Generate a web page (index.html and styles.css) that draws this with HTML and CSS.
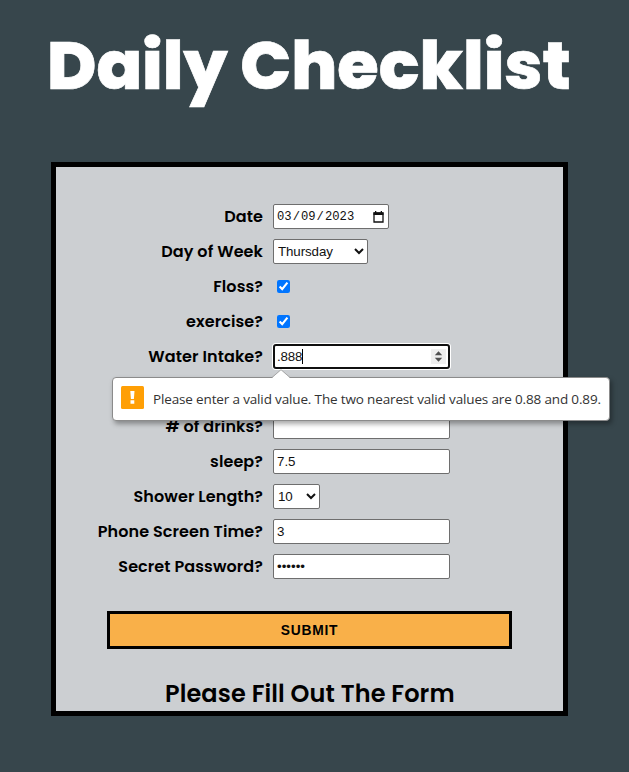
FILE: index.html
```html
<!DOCTYPE html>
<html lang="en">
<head>
<meta charset="utf-8">
<title>Daily Checklist</title>
<link rel="stylesheet" href="styles.css">
</head>
<body>
<h1 class="title">Daily Checklist</h1>
<form class="card">
  <div class="row"><label>Date</label>
    <div class="box date"><span>03</span><i>/</i><span>09</span><i>/</i><span>2023</span>
      <svg class="cal" width="11" height="12" viewBox="0 0 11 12"><path d="M1 2h9v9H1z" fill="none" stroke="#111" stroke-width="1.300"/><path d="M.5 1.500h10v2.500H.5zM2 0h1.300v2H2zM7.700 0H9v2H7.700z" fill="#111"/></svg>
    </div></div>
  <div class="row"><label>Day of Week</label><select class="box day"><option>Thursday</option></select></div>
  <div class="row"><label>Floss?</label><input type="checkbox" checked></div>
  <div class="row"><label>exercise?</label><input type="checkbox" checked></div>
  <div class="row"><label>Water Intake?</label>
    <div class="box wide focused"><span>.888</span><b class="caret"></b>
      <svg class="spin" width="15" height="15" viewBox="0 0 15 15"><path d="M0 0h15v15H0z" fill="#efefef"/><path d="M3.800 6.300 7.500 2.300 11.200 6.300zM3.800 8.700 7.500 12.700 11.200 8.700z" fill="#505050"/></svg>
      <div class="tip" role="alert">
        <svg class="pointer" width="18" height="9" viewBox="0 0 18 9"><path d="M0 9 9 .7 18 9z" fill="#fff"/><path d="M0 8.500 9 .7 18 8.500" fill="none" stroke="#999" stroke-width=".8"/></svg>
        <svg class="warn" width="23" height="23" viewBox="0 0 23 23"><rect width="23" height="23" rx="1.500" fill="#ff9f05"/><path d="M9.300 5h4.200l-.6 8H9.900zM9.500 14.300h3.800v3.500H9.500z" fill="#fff"/></svg>
        <span>Please enter a valid value. The two nearest valid values are 0.88 and 0.89.</span>
      </div>
    </div></div>
  <div class="row"></div>
  <div class="row"><label># of drinks?</label><input class="box wide" type="text"></div>
  <div class="row"><label>sleep?</label><input class="box wide" type="text" value="7.5"></div>
  <div class="row"><label>Shower Length?</label><select class="box shower"><option>10</option></select></div>
  <div class="row"><label>Phone Screen Time?</label><input class="box wide" type="text" value="3"></div>
  <div class="row"><label>Secret Password?</label><input class="box wide" type="password" value="secret"></div>
  <button class="submit" type="button">SUBMIT</button>
  <h2 class="message">Please Fill Out The Form</h2>
</form>
</body>
</html>
```
FILE: styles.css
```css
* { box-sizing: border-box; }
body {
  margin: 0;
  height: 772px;
  overflow: hidden;
  background: #37464c;
  font-family: Poppins, Inter, sans-serif;
  color: #000;
}
.title {
  margin: 0;
  padding: 16px 0 0 47px;
  height: 162px;
  font-size: 67.2px;
  line-height: 100px;
  font-weight: 800;
  color: #fff;
  -webkit-text-stroke: 0.7px #fff;
  white-space: nowrap;
}
.card {
  width: 517px;
  height: 554px;
  margin-left: 51px;
  padding-top: 32px;
  border: 5px solid #000;
  background: #cccfd2;
}
.row {
  display: grid;
  grid-template-columns: 207px 1fr;
  column-gap: 10px;
  align-items: center;
  height: 35px;
}
label {
  text-align: right;
  font-size: 16px;
  font-weight: 600;
  line-height: 24px;
  letter-spacing: 0.09px;
  white-space: nowrap;
}
input[type="checkbox"] { width: 13px; height: 13px; margin: 0 0 0 4px; }
.box {
  height: 25px;
  margin: 0;
  padding: 1px 3px;
  border: 1px solid #6e6e6e;
  border-radius: 2px;
  background-color: #fff;
  font: 13.333px "Liberation Sans", sans-serif;
  color: #111;
}
select.box { padding: 0; letter-spacing: -0.1px; }
.wide { width: 177px; }
.day { width: 95px; }
.shower { width: 47px; }
.date {
  display: flex;
  align-items: center;
  width: 116px;
  font: 12.2px "Liberation Mono", monospace;
}
.date i { font-style: normal; margin: 0 1px; }
.cal { margin-left: auto; margin-right: 1px; }
.focused {
  position: relative;
  display: flex;
  align-items: center;
  border: 2px solid #101010;
  border-radius: 3px;
  padding: 0 2px;
  box-shadow: 0 0 0 1px #fff;
  letter-spacing: -0.2px;
}
.caret { width: 1px; height: 15px; background: #000; }
.spin { margin-left: auto; }
.tip {
  position: absolute;
  left: -163px;
  top: 31px;
  z-index: 2;
  display: flex;
  align-items: center;
  gap: 9px;
  width: 498px;
  height: 44px;
  padding: 0 8px 4px;
  border: 1px solid #8b8b8b;
  border-radius: 4px;
  background: #fff;
  box-shadow: 2px 3px 5px rgba(0, 0, 0, .35);
  font: 13.5px "Open Sans", sans-serif;
  letter-spacing: -0.15px;
  color: #333;
  white-space: nowrap;
}
.tip span { position: relative; top: 2px; }
.warn { flex: none; }
.pointer { position: absolute; left: 159px; top: -9px; }
.submit {
  display: block;
  width: 405px;
  height: 38px;
  margin: 27px 0 0 51px;
  padding: 0;
  border: 3px solid #000;
  background: #f9b049;
  font: bold 13.8px "Liberation Sans", sans-serif;
  letter-spacing: 0.8px;
  color: #000;
}
.message {
  margin: 27px 0 0 109px;
  font-size: 24px;
  line-height: 36px;
  font-weight: 600;
  letter-spacing: 0.1px;
  white-space: nowrap;
}
```
